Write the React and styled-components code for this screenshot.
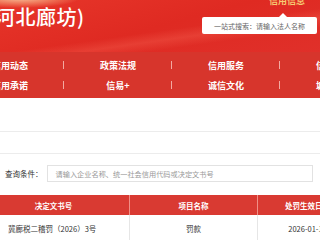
import styled, { createGlobalStyle } from 'styled-components';

const GlobalStyle = createGlobalStyle`
  html, body { margin: 0; padding: 0; background: #fff; }
  body { width: 320px; height: 240px; overflow: hidden; font-family: "Noto Sans CJK SC", "Noto Sans", sans-serif; }
`;

const Page = styled.div`
  width: 320px;
  overflow: hidden;
`;

const Header = styled.div`
  height: 52px;
  display: flex;
  justify-content: space-between;
  background:
    radial-gradient(ellipse 60px 10px at 20px -2px, #f6c09a 0%, rgba(246,160,120,0.6) 55%, rgba(230,60,40,0) 100%),
    linear-gradient(172deg, rgba(255,255,255,0) 55%, rgba(255,120,100,0.25) 65%, rgba(255,255,255,0) 75%),
    linear-gradient(165deg, #e7362a 0%, #df2a22 50%, #e0302a 100%);
`;

const Title = styled.div`
  margin-left: -5px;
  padding-top: 4px;
  color: #fff;
  font-size: 20px;
  font-weight: 500;
  letter-spacing: 0.5px;
  line-height: 26px;
`;

const Side = styled.div`
  display: flex;
  flex-direction: column;
  align-items: flex-end;
  padding-right: 3px;
`;

const InfoLink = styled.div`
  margin-top: -5px;
  margin-right: 12px;
  color: #f7cc73;
  font-size: 9px;
  font-weight: 700;
  line-height: 12px;
`;

const Bubble = styled.div`
  position: relative;
  margin-top: 10px;
  width: 115px;
  height: 17px;
  background: #fff;
  border-radius: 2px;
  display: flex;
  align-items: center;
  padding-left: 12px;
  box-sizing: border-box;
  color: #666;
  font-size: 7px;
  white-space: nowrap;

  &::before {
    content: '';
    position: absolute;
    top: -4px;
    right: 30px;
    border-left: 4px solid transparent;
    border-right: 4px solid transparent;
    border-bottom: 4px solid #fff;
  }
`;

const Nav = styled.div`
  background: #d7352c;
  padding: 3px 0;
  overflow: hidden;
`;

const NavRow = styled.div`
  display: grid;
  grid-template-columns: repeat(4, 108px);
  margin-left: -44px;
  height: 20px;
  align-items: center;
`;

const NavItem = styled.div`
  position: relative;
  text-align: center;
  color: #fff;
  font-size: 9px;
  font-weight: 600;
  white-space: nowrap;

  &:not(:last-child)::after {
    content: '';
    position: absolute;
    right: 0;
    top: 2px;
    height: 8px;
    width: 1px;
    background: rgba(255, 220, 210, 0.7);
  }
`;

const Band = styled.div`
  height: ${p => p.h}px;
  border-bottom: 1px solid #ececec;
`;

const QueryRow = styled.div`
  display: flex;
  align-items: center;
  gap: 4px;
  margin: 11px 7px 0 5px;
`;

const Label = styled.div`
  color: #333;
  font-size: 7.5px;
  white-space: nowrap;
`;

const Input = styled.div`
  flex: 1;
  height: 17px;
  border: 1px solid #e2e2e2;
  box-sizing: border-box;
  display: flex;
  align-items: center;
  padding-left: 8px;
  color: #999;
  font-size: 7.2px;
  white-space: nowrap;
  overflow: hidden;
`;

const Table = styled.div`
  margin: 13px 0 0 -22px;
  width: 380px;
`;

const Row = styled.div`
  display: grid;
  grid-template-columns: 152px 128px 100px;
  height: ${p => p.h}px;
  background: ${p => (p.head ? '#d93a32' : '#fff')};
  border-bottom: ${p => (p.head ? 'none' : '1px solid #e6e6e6')};
`;

const Cell = styled.div`
  display: flex;
  align-items: center;
  justify-content: ${p => (p.left ? 'flex-start' : 'center')};
  padding-left: ${p => (p.left ? '30px' : '0')};
  font-size: 7.5px;
  font-weight: ${p => (p.head ? 700 : 400)};
  color: ${p => (p.head ? '#fff' : '#333')};
  white-space: nowrap;
  overflow: hidden;
  border-right: 1px solid ${p => (p.head ? 'rgba(255,200,190,0.6)' : '#e6e6e6')};
`;

const navTop = ['信用动态', '政策法规', '信用服务', '信用监管'];
const navBottom = ['信用承诺', '信易+', '诚信文化', '城市信用'];

export default function App() {
  return (
    <Page>
      <GlobalStyle />
      <Header>
        <Title>河北廊坊)</Title>
        <Side>
          <InfoLink>信用信息</InfoLink>
          <Bubble>一站式搜索：请输入法人名称</Bubble>
        </Side>
      </Header>
      <Nav>
        <NavRow>
          {navTop.map(t => <NavItem key={t}>{t}</NavItem>)}
        </NavRow>
        <NavRow>
          {navBottom.map(t => <NavItem key={t}>{t}</NavItem>)}
        </NavRow>
      </Nav>
      <Band h={33} />
      <Band h={21} />
      <QueryRow>
        <Label>查询条件：</Label>
        <Input>请输入企业名称、统一社会信用代码或决定文书号</Input>
      </QueryRow>
      <Table>
        <Row head h={20}>
          <Cell head>决定文书号</Cell>
          <Cell head>项目名称</Cell>
          <Cell head>处罚生效日期</Cell>
        </Row>
        <Row h={26}>
          <Cell left>冀廊税二稽罚（2026）3号</Cell>
          <Cell>罚款</Cell>
          <Cell>2026-01-15</Cell>
        </Row>
      </Table>
    </Page>
  );
}
